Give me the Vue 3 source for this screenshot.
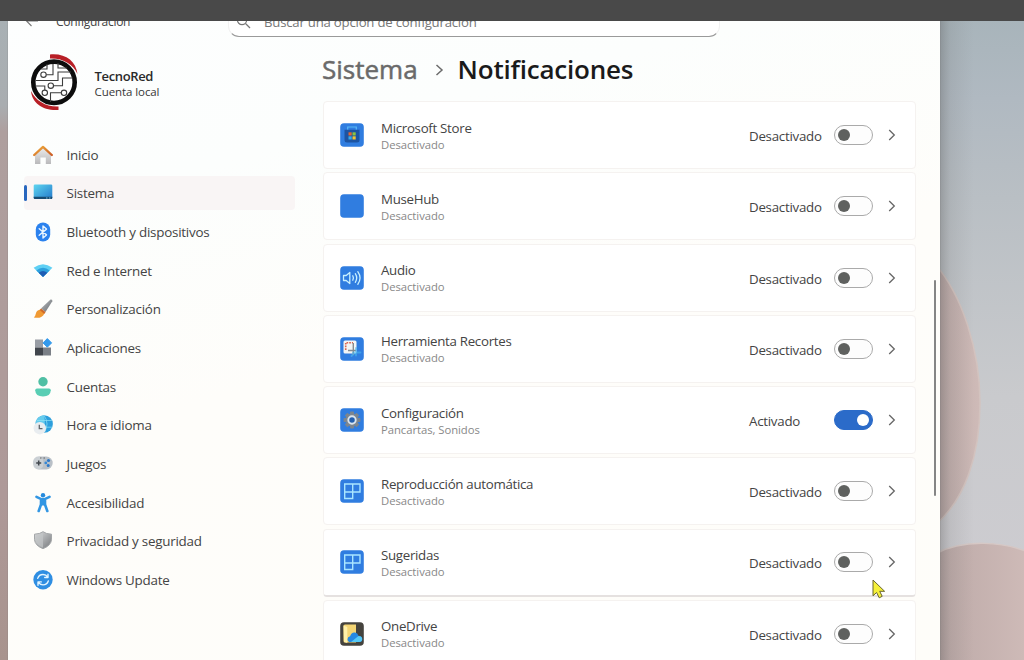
<script setup>
const nav = [
  { id: 'home', label: 'Inicio' },
  { id: 'system', label: 'Sistema', active: true },
  { id: 'bluetooth', label: 'Bluetooth y dispositivos' },
  { id: 'network', label: 'Red e Internet' },
  { id: 'brush', label: 'Personalización' },
  { id: 'apps', label: 'Aplicaciones' },
  { id: 'account', label: 'Cuentas' },
  { id: 'time', label: 'Hora e idioma' },
  { id: 'games', label: 'Juegos' },
  { id: 'access', label: 'Accesibilidad' },
  { id: 'shield', label: 'Privacidad y seguridad' },
  { id: 'update', label: 'Windows Update' },
]
const off = 'Desactivado'
const cards = [
  { icon: 'store', title: 'Microsoft Store', sub: off },
  { icon: 'muse', title: 'MuseHub', sub: off },
  { icon: 'audio', title: 'Audio', sub: off },
  { icon: 'snip', title: 'Herramienta Recortes', sub: off },
  { icon: 'gear', title: 'Configuración', sub: 'Pancartas, Sonidos', on: true },
  { icon: 'panes', title: 'Reproducción automática', sub: off },
  { icon: 'panes', title: 'Sugeridas', sub: off, edge: true },
  { icon: 'drive', title: 'OneDrive', sub: off },
]
const teeth = [0, 45, 90, 135, 180, 225, 270, 315]
</script>

<template>
  <div class="screen">
    <svg class="wallpaper" width="1024" height="660" viewBox="0 0 1024 660">
      <defs>
        <linearGradient id="sky" x1="0" y1="0" x2="0" y2="1">
          <stop offset="0" stop-color="#a6b3b9" /><stop offset=".15" stop-color="#b0b9c1" />
          <stop offset=".3" stop-color="#b9bfc4" /><stop offset=".6" stop-color="#c9cacd" /><stop offset="1" stop-color="#cfcdd2" />
        </linearGradient>
        <linearGradient id="left" x1="0" y1="0" x2="0" y2="1">
          <stop offset="0" stop-color="#a8b1b5" /><stop offset=".16" stop-color="#a9adb0" />
          <stop offset=".2" stop-color="#ae9f9e" /><stop offset=".75" stop-color="#ae9998" /><stop offset="1" stop-color="#a8938d" />
        </linearGradient>
        <linearGradient id="petal" x1="0" y1="0" x2="1" y2="0">
          <stop offset="0" stop-color="#bca9a7" /><stop offset="1" stop-color="#cfbbb8" />
        </linearGradient>
        <linearGradient id="shade" x1="0" y1="0" x2="1" y2="0">
          <stop offset="0" stop-color="#555" stop-opacity=".34" /><stop offset=".3" stop-color="#666" stop-opacity=".14" /><stop offset="1" stop-color="#777" stop-opacity="0" />
        </linearGradient>
      </defs>
      <rect width="1024" height="660" fill="url(#sky)" />
      <rect width="9" height="660" fill="url(#left)" />
      <path d="M935 264C962 295 980 350 980 403C980 455 965 500 935 525Z" fill="url(#petal)" stroke="#d3c3bf" stroke-width="1.5" />
      <path d="M935 554C965 538 1005 542 1030 553V665H935Z" fill="url(#petal)" stroke="#d6c8c5" stroke-width="1.5" />
      <rect x="940" width="34" height="660" fill="url(#shade)" />
    </svg>

    <div class="window">
      <header class="top">
        <svg class="back" width="14" height="12" viewBox="0 0 14 12"><path d="M6.5 1 1.5 6l5 5M1.5 6H13" /></svg>
        <span class="app-name"><span class="t">Configuración</span></span>
        <div class="search">
          <svg width="16" height="16" viewBox="0 0 16 16"><circle cx="6" cy="6" r="4.6" /><path d="m9.5 9.500 4.500 4.500" /></svg>
          <span class="t">Buscar una opción de configuración</span>
        </div>
      </header>

      <div class="body">
        <aside>
          <div class="profile">
            <svg width="50" height="60" viewBox="0 0 50 60">
              <path d="M21 1.500C36 0 47 8 48.500 21C44 11 34 5 21 5.500Z" fill="#b81f26" />
              <path d="M2 38C3 50 14 58 29.500 57V53.500C17 54 7 48 2 38Z" fill="#b81f26" />
              <circle cx="25" cy="29.300" r="20.700" fill="#fff" stroke="#0d0d0d" stroke-width="4.600" />
              <g fill="none" stroke="#3d3d3d" stroke-width="1.100">
                <circle cx="14.500" cy="21.700" r="2.700" /><circle cx="21.800" cy="32.700" r="2.700" />
                <circle cx="15.800" cy="39.800" r="2.700" /><circle cx="35" cy="39.800" r="2.700" />
                <path d="M17.200 21.700H24V11M7 27.500H29V19H42M24.500 32.700H33.500V25H44M6 33H15.800V37M32.300 39.800H21.500V49M29 10v5h9M12 16h6v-5" />
              </g>
            </svg>
            <div class="who"><b class="t">TecnoRed</b><span class="t">Cuenta local</span></div>
          </div>

          <nav>
            <a v-for="n in nav" :key="n.id" :class="{ active: n.active }">
              <svg class="ico" width="20" height="20" viewBox="0 0 20 20">
                <template v-if="n.id === 'home'">
                  <defs><linearGradient id="hw" x2="0" y2="1"><stop stop-color="#ededed" /><stop offset="1" stop-color="#b9b9bb" /></linearGradient>
                    <linearGradient id="hr" x2="1" y2="1"><stop stop-color="#f0ad3c" /><stop offset="1" stop-color="#cb5c25" /></linearGradient></defs>
                  <path d="M2 9.500 10 2.500l8 7v9.500h-5.200v-6.500H7.400V19H2Z" fill="url(#hw)" />
                  <path d="M1.200 10 10 1.900 18.800 10" fill="none" stroke="url(#hr)" stroke-width="2.300" stroke-linejoin="round" stroke-linecap="round" />
                </template>
                <template v-else-if="n.id === 'system'">
                  <defs><linearGradient id="sy" x2="1" y2="1"><stop stop-color="#5fd6f0" /><stop offset="1" stop-color="#2379cb" /></linearGradient></defs>
                  <rect x=".7" y="1.500" width="18.600" height="14.500" rx="1.200" fill="url(#sy)" />
                  <path d="M.7 13.700h18.600v1q0 1.300-1.300 1.300H2q-1.300 0-1.300-1.300Z" fill="#174b72" /><path d="M13 15h1.500M16 15h1.500" stroke="#8ed3ef" stroke-width=".8" />
                </template>
                <template v-else-if="n.id === 'bluetooth'">
                  <rect x="2.800" y=".4" width="14.400" height="19.200" rx="7.200" fill="#2b82ee" />
                  <path d="m6.200 6.800 7.300 6.100L10 16V4l3.500 3.100-7.300 6.100" fill="none" stroke="#e9f5ff" stroke-width="1.400" stroke-linejoin="round" stroke-linecap="round" />
                </template>
                <template v-else-if="n.id === 'network'">
                  <path d="M.6 6.800Q10-.4 19.400 6.800L10 16Z" fill="#5fd0f4" />
                  <path d="M3.300 9.400Q10 3.900 16.700 9.400L10 16Z" fill="#2da0dd" />
                  <path d="M5.700 11.800Q10 8.200 14.300 11.800L10 16Z" fill="#1f5db4" />
                </template>
                <template v-else-if="n.id === 'brush'">
                  <defs><linearGradient id="bh" x2="1" y2="1"><stop stop-color="#b9bdc0" /><stop offset="1" stop-color="#676b70" /></linearGradient></defs>
                  <path d="M17.500.5q2.300-.5 1.800 1.800L12.500 13 8 9.500Z" fill="url(#bh)" />
                  <path d="M6.800 10.800q3.500-.5 4.500 3.600Q9 20 .8 18.500q1.600-1.200 2-3.700.6-3.300 4-4Z" fill="#f09a34" />
                  <path d="M8 9.400 12.600 13l-1.300 2-4.600-4Z" fill="#cf6b2b" />
                </template>
                <template v-else-if="n.id === 'apps'">
                  <rect x="2" y="1.500" width="8" height="8" fill="#999ea5" /><rect x="2" y="9.500" width="8" height="8" fill="#41464d" /><rect x="10" y="9.500" width="8" height="8" fill="#7b8087" />
                  <path d="m14.300.6 4.300 4.300-4.300 4.300L10 4.900Z" fill="#3299ec" stroke="#3299ec" stroke-linejoin="round" />
                </template>
                <template v-else-if="n.id === 'account'">
                  <circle cx="10" cy="4.700" r="4.700" fill="#50bfa4" />
                  <path d="M4 11.500h12q1.800 0 1.800 1.800Q17.500 19.500 10 19.500T2.200 13.300Q2.200 11.500 4 11.500Z" fill="#59ceb4" />
                </template>
                <template v-else-if="n.id === 'time'">
                  <circle cx="11.200" cy="9" r="8.700" fill="#2d9fdc" /><path d="M11 .3Q4 1 2.600 8q5 3 7.400 9 3-8 1-16.700Z" fill="#66cced" />
                  <path d="M11 .3q6 8.700 0 17.400M3.500 5.500h15.400M9 12.200h10.300" fill="none" stroke="#8fe2f5" stroke-width=".7" />
                  <circle cx="6.800" cy="13.200" r="6.200" fill="#e9edf0" /><path d="M6.300 9.700v4h3.200" fill="none" stroke="#60656a" stroke-width="1.300" />
                </template>
                <template v-else-if="n.id === 'games'">
                  <rect x=".3" y="2.600" width="19.400" height="12.800" rx="6.400" fill="#b9c0c7" /><rect x=".3" y="2.600" width="10" height="12.800" rx="5" fill="#cbd0d4" />
                  <path d="M3.200 8.900h5M5.700 6.400v5" stroke="#43484e" stroke-width="1.500" /><path d="M7 4h1.500m2 0H12" stroke="#666" />
                  <circle cx="15.500" cy="6.500" r="1.600" fill="#2c78c9" /><circle cx="12.800" cy="8.900" r="1.400" fill="#3689d8" /><circle cx="15.200" cy="11.400" r="1.500" fill="#2c78c9" />
                </template>
                <template v-else-if="n.id === 'access'">
                  <circle cx="10" cy="2.200" r="2.200" fill="#258add" />
                  <path d="M3.500 3.900 8.200 6.200h3.600L16.500 3.900M8 7.500h4v4l2.300 6.500M8 7.500v4L5.700 18" fill="none" stroke="#3296e3" stroke-width="2.600" stroke-linecap="round" stroke-linejoin="round" /><path d="M7 6.500h6v6H7Z" fill="#3296e3" />
                </template>
                <template v-else-if="n.id === 'shield'">
                  <defs><linearGradient id="sh" x2="1" y2="1"><stop stop-color="#dedfe0" /><stop offset="1" stop-color="#75787b" /></linearGradient></defs>
                  <path d="M10 .7Q13 3 18.500 3.200v5.500Q18 14.500 10 17.700 2 14.500 1.500 8.700V3.200Q7 3 10 .7Z" fill="url(#sh)" stroke="#a3a6a8" />
                  <path d="M10 1.700Q7 3.900 2.500 4.200v4.500Q3 13.800 10 16.700Z" fill="#c3c6c8" opacity=".7" />
                </template>
                <template v-else>
                  <circle cx="10" cy="9.700" r="9.700" fill="#2f8ee2" />
                  <path d="M4.700 8.400Q6 4.500 10 4.500q3 0 4.800 2.700M15 4.200v3.300h-3.300M15.300 11Q14 14.900 10 14.900q-3 0-4.800-2.700M5 15.200v-3.300h3.300" fill="none" stroke="#e4f5ff" stroke-width="1.400" stroke-linecap="round" stroke-linejoin="round" />
                </template>
              </svg>
              <span class="t">{{ n.label }}</span>
            </a>
          </nav>
        </aside>

        <main>
          <h1>
            <span class="crumb t">Sistema</span>
            <svg width="9" height="12" viewBox="0 0 9 12"><path d="M1.500 1 7 6l-5.500 5" /></svg>
            <span class="t">Notificaciones</span>
          </h1>
          <section>
            <article v-for="c in cards" :key="c.title" :class="{ edge: c.edge }">
              <svg class="tile" width="24" height="24" viewBox="0 0 24 24">
                <rect x=".2" y=".2" width="23.600" height="23.600" rx="3.800" :fill="c.icon === 'drive' ? '#45433e' : '#307de0'" />
                <template v-if="c.icon === 'store'">
                  <path d="M4.500 6.800h15V17q0 2.500-2.500 2.500H7Q4.500 19.500 4.500 17Z" fill="#1d54a2" /><path d="M7.700 6.500V4h8.600v2.500" fill="none" stroke="#59b9f4" stroke-width="1.200" />
                  <path d="M8.500 9.300h3.200v3.200H8.500Z" fill="#e6652f" /><path d="M12.500 9.300h3.200v3.200h-3.200Z" fill="#8dc33f" /><path d="M8.500 13.300h3.200v3.200H8.500Z" fill="#38a9e9" /><path d="M12.500 13.300h3.200v3.200h-3.200Z" fill="#f5c531" />
                </template>
                <g v-else-if="c.icon === 'audio'" fill="none" stroke="#c8f0ff" stroke-width="1.300" stroke-linejoin="round" stroke-linecap="round">
                  <path d="M3.500 9.500h2.700l3.600-3v11l-3.600-3H3.500ZM12.800 9.800q1.300 2.200 0 4.400M15.300 7.700q2.800 4.300 0 8.600M17.800 5.700q4.500 6.300 0 12.600" />
                </g>
                <template v-else-if="c.icon === 'snip'">
                  <rect x="3.500" y="3.500" width="13" height="13" rx="1.500" fill="#f3f5f5" /><path d="M5.700 13V5.700H13" fill="none" stroke="#da6550" stroke-width="1.600" stroke-dasharray="1.700 1" />
                  <path d="M8 13.500h8M13.300 6v12" stroke="#858b90" stroke-width="1.400" /><path d="M13 15.500h7.500M16 11v7.500M11.500 19l3-3" stroke="#49b8f0" stroke-width="1.900" stroke-linecap="round" opacity=".6" />
                </template>
                <template v-else-if="c.icon === 'gear'">
                  <rect v-for="a in teeth" :key="a" x="10" y="3.600" width="4" height="4.400" rx=".8" fill="#7c858e" :transform="`rotate(${a} 12 12)`" />
                  <circle cx="12" cy="12" r="6.400" fill="#7e8790" /><circle cx="12" cy="12" r="3.700" fill="#235fae" stroke="#dbe6ef" stroke-width="1.900" />
                </template>
                <g v-else-if="c.icon === 'panes'" fill="none" stroke="#a9e5ff" stroke-width="1.400">
                  <path d="M4.700 5H20v8H12.700v6.500h-8ZM12.700 5v8h-8" />
                </g>
                <template v-else-if="c.icon === 'drive'">
                  <path d="M3.500 4q0-1.500 1.500-1.500h11v18H5q-1.500 0-1.500-1.500Z" fill="#f4d574" /><path d="M3.500 3.500 7.300 5v16L4 20Z" fill="#fff0a9" />
                  <path d="M10.500 20q-3 0-3-2.800 0-2.500 2.600-2.900Q11.300 10 15 10.500q2.800.5 3.400 3.200 3.600.3 3.800 3.300 0 3-3.100 3Z" fill="#2589e4" /><path d="M11 20 18.500 14q3.600 0 3.700 3 0 3-3.100 3Z" fill="#55c9f6" />
                </template>
              </svg>
              <div class="copy"><span class="title t">{{ c.title }}</span><span class="sub t">{{ c.sub }}</span></div>
              <span class="state"><span class="t">{{ c.on ? 'Activado' : off }}</span></span>
              <i class="switch" :class="{ on: c.on }"></i>
              <svg class="chev" width="8" height="12" viewBox="0 0 8 12"><path d="M1.200 1 6.300 6l-5.100 5" /></svg>
            </article>
          </section>
        </main>
      </div>
      <div class="scroll"></div>
    </div>

    <div class="bar"></div>
    <svg class="cursor" width="15" height="20" viewBox="0 0 15 20"><path d="M1 1v15.800l3.600-3.300 2.600 5.300 3-1.500-2.500-5h4.900Z" /></svg>
  </div>
</template>

<style>
html, body { margin: 0; overflow: hidden; }
</style>
<style scoped>
.screen { position: relative; width: 1024px; height: 660px; overflow: hidden; font-family: "Open Sans", "Noto Sans", sans-serif; color: #444; }
.wallpaper { position: absolute; inset: 0; }
.t { white-space: nowrap; display: inline-block; }
.window { position: relative; box-sizing: border-box; width: 932px; height: 660px; margin-left: 8px; overflow: hidden; background: linear-gradient(165deg, #fdfefe 0, #fcfefd 24%, #fefdfa 50%, #fefdf9 100%); box-shadow: 0 0 1px #777; }
.bar { position: absolute; left: 0; top: 0; width: 1024px; height: 21px; background: #494949; }
.top { display: flex; align-items: center; height: 42px; padding-left: 17px; box-sizing: border-box; }
.back { margin-right: 17px; fill: none; stroke: #777; stroke-width: 1.1; }
.app-name { width: 172px; font-size: 12px; line-height: 16px; letter-spacing: -.3px; padding-top: 2px; box-sizing: border-box; }
.search { width: 492px; height: 34px; margin-top: -2px; box-sizing: border-box; padding: 3px 0 0 7px; border: 1px solid #f1f1f1; border-bottom: 1.500px solid #9a9a9a; border-radius: 11px; background: #fff; display: flex; align-items: center; gap: 12px; font-size: 13.200px; letter-spacing: -.22px; color: #777; }
.search svg { fill: none; stroke: #777; stroke-width: 1.200; }
.body { display: flex; }
aside { width: 315px; flex: none; }
.profile { display: flex; align-items: center; height: 60px; margin: 11px 0 0 21px; gap: 15.500px; }
.who { display: flex; flex-direction: column; font-size: 11.500px; line-height: 16px; padding-top: 2px; letter-spacing: -.08px; color: #383838; }
.who b { font-size: 13px; font-weight: 600; letter-spacing: -.35px; color: #2a2a2a; }
nav { display: flex; flex-direction: column; gap: 4.700px; margin: 24.500px 0 0 16px; }
nav a { position: relative; display: flex; align-items: center; height: 34px; width: 271px; border-radius: 4px; font-size: 13.400px; letter-spacing: -.24px; color: #444; }
nav a.active { background: #f9f5f5; }
nav a.active::before { content: ''; position: absolute; left: 0; top: 9px; width: 3px; height: 16px; border-radius: 2px; background: #2867be; }
.ico { margin: 0 13.200px 0 9.400px; flex: none; }
main { width: 593px; }
h1 { display: flex; align-items: center; height: 36px; margin: 10px 0 13px -1px; font-size: 26px; line-height: 36px; font-weight: 600; letter-spacing: -.22px; color: #1a1a1a; }
h1 .t { position: relative; top: -1px; }
h1 .crumb { color: #6a6a6a; font-weight: 400; letter-spacing: 0; -webkit-text-stroke: .5px #6a6a6a; }
h1 svg { margin: 0 14px 0 17px; fill: none; stroke: #6c6c6c; stroke-width: 1.500; }
section { display: flex; flex-direction: column; gap: 3.250px; }
article { display: flex; align-items: center; box-sizing: border-box; height: 68px; flex: none; padding: 0 19px 0 16px; background: #fff; border: 1px solid #f5f2f0; border-radius: 4px; }
article.edge { border-bottom: 2px solid #e5e1e0; }
.tile { flex: none; margin-right: 17px; }
.copy { display: flex; flex-direction: column; flex: 1; padding-top: 2px; }
.title { font-size: 13.300px; line-height: 17px; letter-spacing: -.3px; }
.sub { font-size: 11.300px; line-height: 16px; letter-spacing: -.05px; color: #888; }
.state { width: 85px; font-size: 13.300px; letter-spacing: -.25px; padding-top: 2px; }
.switch { box-sizing: border-box; width: 39px; height: 20px; border: 1.500px solid #aaa; border-radius: 10px; padding: 3px; background: #fdfdfd; }
.switch::before { content: ''; display: block; width: 12px; height: 12px; border-radius: 6px; background: #5f615f; }
.switch.on { background: #2b6bc9; border-color: #2b6bc9; }
.switch.on::before { background: #fff; margin-left: 19px; }
.chev { margin-left: 15px; fill: none; stroke: #666; stroke-width: 1.300; }
.scroll { position: absolute; left: 926px; top: 280px; width: 2px; height: 216px; border-radius: 1px; background: #858585; }
.cursor { position: absolute; left: 872px; top: 579px; fill: #f5f03a; stroke: #68652f; stroke-width: 1; }
</style>
